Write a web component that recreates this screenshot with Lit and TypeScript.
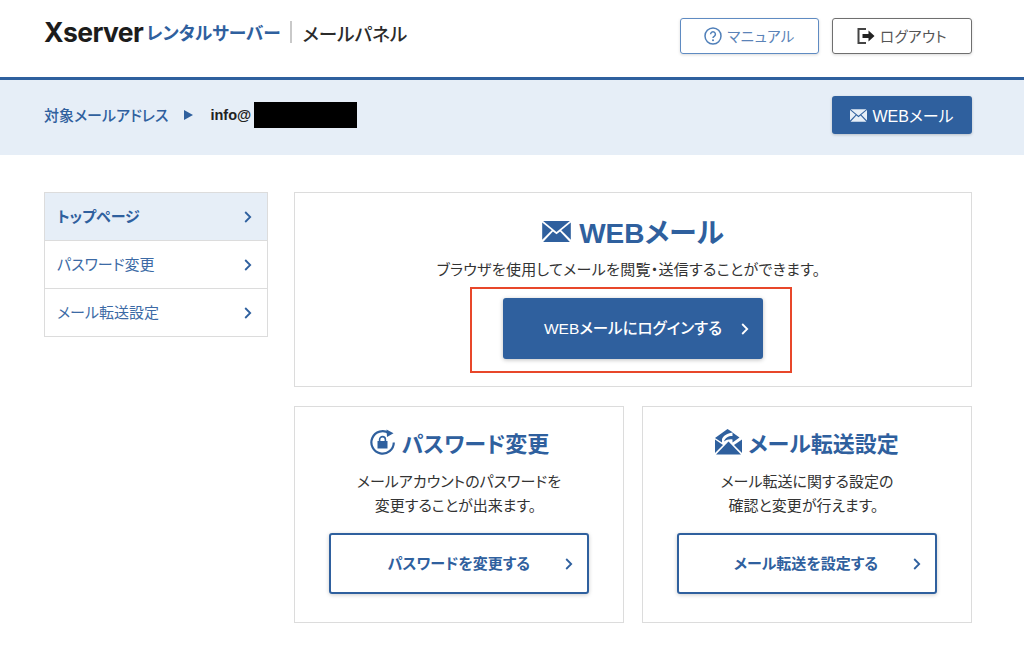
import { LitElement, html, css } from "lit";
import { customElement } from "lit/decorators.js";

const mail = (cls: string) => html`<svg class=${cls} viewBox="0 0 30 22" aria-hidden="true">
  <path fill="currentColor" d="M1 0h28L15 11.5z"/>
  <path fill="currentColor" d="M0 1.5v18.2L10 9.8z"/>
  <path fill="currentColor" d="M30 1.5v18.2L20 9.8z"/>
  <path fill="currentColor" d="M11.3 11 15 14l3.700-3L29 22H1z"/>
</svg>`;

const chevron = html`<svg class="chev" viewBox="0 0 8 12" aria-hidden="true"><path d="M1.2 1 6.2 6l-5 5" fill="none" stroke="currentColor" stroke-width="1.8"/></svg>`;

@customElement("app-root")
export class AppRoot extends LitElement {
  static styles = css`
    :host { display: block; width: 1024px; height: 650px; overflow: hidden; background: #fff; color: #333;
      font-family: "Liberation Sans", "Noto Sans CJK JP", sans-serif; font-feature-settings: "palt"; }
    * { box-sizing: border-box; }
    a { text-decoration: none; color: inherit; }
    .top { height: 80px; border-bottom: 3px solid #2f609e; padding: 18px 52px 0 44px; display: flex; justify-content: space-between; align-items: flex-start; }
    .logo { display: flex; align-items: center; height: 28px; }
    .x { font: 700 26.500px/28px Inter, "Liberation Sans", sans-serif; color: #1c1c1c; letter-spacing: -0.6px; }
    .rental { font-size: 17.700px; font-weight: 700; color: #2f609e; margin-left: 3px; }
    .sep { width: 2px; height: 22px; background: #c9c9c9; margin: 0 11px 0 9px; }
    .panel { font-size: 18.600px; font-weight: 500; color: #2b2b2b; }
    .top-btns { display: flex; gap: 13px; }
    .tbtn { width: 139px; height: 36px; border: 1px solid #5f8bc2; border-radius: 3px; display: flex; align-items: center; justify-content: center; gap: 5px; font-size: 14.500px; color: #5b83b8; box-shadow: 0 1px 3px rgba(0,0,0,.15); letter-spacing: .4px; padding-bottom: 1px; }
    .tbtn.out { width: 140px; border-color: #6f6f6f; color: #555; }
    .tbtn svg { width: 18px; height: 18px; }
    .band { height: 75px; background: #e6eef7; padding: 16px 52px 0 44px; display: flex; justify-content: space-between; }
    .addr { display: flex; align-items: center; height: 38px; }
    .addr .lbl { color: #2f609e; font-weight: 500; font-size: 15px; padding-bottom: 2px; }
    .tri { width: 0; height: 0; border-left: 9px solid #2f609e; border-top: 5.500px solid transparent; border-bottom: 5.500px solid transparent; margin: 0 17px 0 16px; }
    .mailaddr { font-weight: 700; color: #222; font-size: 14.500px; }
    .mask { width: 103px; height: 26px; background: #000; margin-left: 3px; }
    .wbtn { width: 140px; height: 38px; background: #2f609e; color: #fff; border-radius: 3px; display: flex; align-items: center; justify-content: center; gap: 5px; font-size: 16px; box-shadow: 0 1px 3px rgba(0,0,0,.2); }
    .wbtn .ic { width: 17px; height: 13px; color: #e6eef7; }
    .body { display: flex; gap: 26px; padding: 37px 52px 0 44px; align-items: flex-start; }
    .side { width: 224px; border: 1px solid #dcdcdc; flex: none; }
    .side a { height: 48px; display: flex; align-items: center; justify-content: space-between; padding: 0 15px 2px 12px; font-size: 15px; color: #3c6aa5; border-top: 1px solid #dcdcdc; }
    .side a:first-child { border-top: 0; height: 47px; background: #e6eef7; font-weight: 700; color: #2f609e; }
    .chev { width: 8px; height: 12px; color: #2f609e; flex: none; }
    .side .chev { margin-top: 3px; }
    .main { flex: 1; display: flex; flex-direction: column; gap: 19px; }
    .card { border: 1px solid #dcdcdc; display: flex; flex-direction: column; align-items: center; }
    .card.big { height: 195px; padding-top: 20px; }
    .row { display: flex; gap: 18px; }
    .row .card { width: 330px; height: 217px; padding-top: 18px; }
    h2 { margin: 0; height: 36px; display: flex; align-items: center; gap: 6px; font-size: 22px; font-weight: 700; color: #2f609e; }
    .row h2 { padding-bottom: 3px; }
    .big h2 { font-size: 28px; gap: 8px; }
    .big h2 .ic { width: 29px; height: 21px; }
    h2 svg { width: 27px; height: 26px; flex: none; }
    p { margin: 9px 0 0; font-size: 15px; line-height: 24px; text-align: center; color: #333; }
    .big p { letter-spacing: .3px; }
    .end { padding-right: 7px; }
    .big .end { padding-right: 9px; }
    .mark { margin: 5px 4px 0 0; border: 2px solid #e8472a; padding: 9px 27px 12px 31px; }
    .cta { width: 260px; height: 61px; background: #2f609e; color: #fff; border-radius: 3px; display: flex; align-items: center; justify-content: flex-end; gap: 19px; padding: 0 14px 3px 0; font-size: 15.500px; box-shadow: 0 1px 4px rgba(0,0,0,.25); font-weight: 500; }
    .cta .chev { color: #fff; margin-top: 3px; }
    .ghost { margin-top: 15px; width: 260px; height: 61px; border: 2px solid #2f609e; border-radius: 3px; color: #2f609e; display: flex; align-items: center; justify-content: flex-end; gap: 35px; padding: 0 14px 3px 0; font-size: 15px; font-weight: 700; box-shadow: 0 1px 4px rgba(0,0,0,.2); }
    .ghost .chev { margin-top: 3px; }
  `;

  render() {
    return html`
      <header class="top">
        <div class="logo">
          <span class="x">Xserver</span>
          <span class="rental">レンタルサーバー</span>
          <i class="sep"></i>
          <span class="panel">メールパネル</span>
        </div>
        <nav class="top-btns">
          <a class="tbtn" href="#">
            <svg viewBox="0 0 18 18" aria-hidden="true">
              <circle cx="9" cy="9" r="8" fill="none" stroke="#4f7fb9" stroke-width="1.5"/>
              <path d="M6.600 7.200a2.400 2.400 0 1 1 3.600 2.100c-.8.5-1.200.9-1.200 1.800" fill="none" stroke="#4f7fb9" stroke-width="1.5"/>
              <circle cx="9" cy="13.200" r="1" fill="#4f7fb9"/>
            </svg>
            マニュアル
          </a>
          <a class="tbtn out" href="#">
            <svg viewBox="0 0 18 18" aria-hidden="true">
              <path d="M9 2H1.500v14H9" fill="none" stroke="#444" stroke-width="2"/>
              <path fill="#222" d="M5.500 7h6V3.600L17.500 9l-6 5.400V11h-6z"/>
            </svg>
            ログアウト
          </a>
        </nav>
      </header>
      <section class="band">
        <div class="addr">
          <span class="lbl">対象メールアドレス</span>
          <i class="tri"></i>
          <span class="mailaddr">info@</span>
          <i class="mask"></i>
        </div>
        <a class="wbtn" href="#">${mail("ic")}WEBメール</a>
      </section>
      <div class="body">
        <aside class="side">
          <a href="#">トップページ${chevron}</a>
          <a href="#">パスワード変更${chevron}</a>
          <a href="#">メール転送設定${chevron}</a>
        </aside>
        <main class="main">
          <section class="card big">
            <h2>${mail("ic")}WEBメール</h2>
            <p>ブラウザを使用してメールを閲覧・送信することができます<span class="end">。</span></p>
            <div class="mark"><a class="cta" href="#">WEBメールにログインする${chevron}</a></div>
          </section>
          <div class="row">
            <section class="card">
              <h2>
                <svg viewBox="0 0 27 26" aria-hidden="true">
                  <path d="M20 4.200A11.200 11.200 0 1 0 24.800 13.500" fill="none" stroke="#2f609e" stroke-width="2.200"/>
                  <path fill="#2f609e" d="M17.500 .5l7 3.800-6.500 3.700z"/>
                  <path fill="#2f609e" d="M8.500 12h10v7.500h-10z"/>
                  <path d="M10.600 12v-1.500a2.900 2.900 0 0 1 5.800 0V12" fill="none" stroke="#2f609e" stroke-width="1.600"/>
                </svg>
                パスワード変更
              </h2>
              <p>メールアカウントのパスワードを<br />変更することが出来ます<span class="end">。</span></p>
              <a class="ghost" href="#"><span>パスワードを変更する</span>${chevron}</a>
            </section>
            <section class="card">
              <h2>
                <svg viewBox="0 0 27 26" aria-hidden="true">
                  <path fill="#2f609e" d="M12.500 0l5.500 3.500c-5 .5-9 2.500-11 6.500v3.500L0 9z"/>
                  <path fill="#2f609e" d="M0 10.500 8 16l-8 8z"/>
                  <path fill="#2f609e" d="M27 10.500 19 16l8 8z"/>
                  <path fill="#2f609e" d="M13.500 12.500 26 25.500H1z"/>
                  <path fill="#2f609e" d="M9 12.500c1-3.500 4-5.500 8.500-5.500V3.500l7 5-7 5v-3c-3.500-.5-6 .5-8.500 2z"/>
                </svg>
                メール転送設定
              </h2>
              <p>メール転送に関する設定の<br />確認と変更が行えます<span class="end">。</span></p>
              <a class="ghost" href="#"><span>メール転送を設定する</span>${chevron}</a>
            </section>
          </div>
        </main>
      </div>
    `;
  }
}
